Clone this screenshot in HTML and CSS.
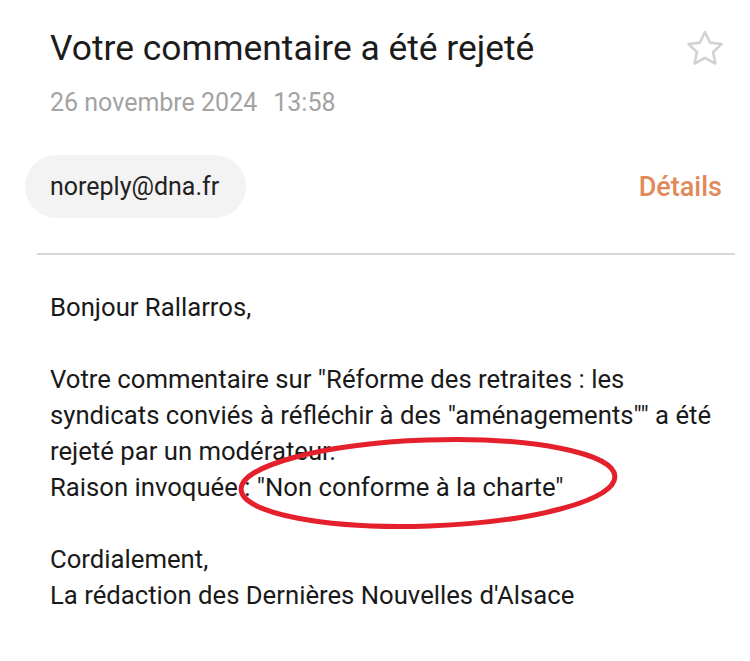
FILE: index.html
```
<!DOCTYPE html>
<html lang="fr">
<head>
    <meta charset="UTF-8">
    <meta name="viewport" content="width=device-width, initial-scale=1.0">
    <title>Votre commentaire a été rejeté</title>
    <link rel="stylesheet" href="styles.css">
</head>
<body>
    <div class="page">
        <div class="header">
            <h1>Votre commentaire a été rejeté</h1>
            <svg class="star" viewBox="0 0 40 40" width="44" height="44">
                <path d="M20 4.5 L24.6 14.2 L35 15.5 L27.4 22.7 L29.4 33.2 L20 28 L10.6 33.2 L12.6 22.7 L5 15.5 L15.4 14.2 Z"
                      fill="none" stroke="#d2d2d2" stroke-width="2.3" stroke-linejoin="round"/>
            </svg>
        </div>
        <div class="date"><span>26 novembre 2024</span><span class="time">13:58</span></div>

        <div class="sender">
            <span class="chip">noreply@dna.fr</span>
            <a class="details" href="#">Détails</a>
        </div>
        <hr class="divider">

        <div class="message">
            <p>Bonjour Rallarros,</p>
            <p>Votre commentaire sur "Réforme des retraites : les syndicats conviés à réfléchir à des "aménagements"" a été rejeté par un modérateur.<br>
            Raison invoquée : "Non conforme à la charte"</p>
            <p>Cordialement,<br>
            La rédaction des Dernières Nouvelles d'Alsace</p>
        </div>

        <svg class="circle" width="400" height="110" viewBox="0 0 400 110">
            <ellipse cx="198" cy="53" rx="187" ry="43" transform="rotate(-2 198 53)"
                     fill="none" stroke="#e3202b" stroke-width="5"/>
        </svg>
    </div>
</body>
</html>
```

FILE: styles.css
```
body {
    margin: 0;
    background-color: #fff;
    font-family: Roboto, "Liberation Sans", sans-serif;
    color: #1a1a1a;
}

.page {
    position: relative;
    width: 750px;
    height: 661px;
    overflow: hidden;
}

.header {
    display: flex;
    align-items: flex-start;
    justify-content: space-between;
    padding: 28px 23px 0 50px;
}

h1 {
    margin: 0;
    font-size: 35.4px;
    font-weight: 400;
    line-height: 40px;
    color: #1c1c1c;
}

.star {
    margin-top: -1px;
}

.date {
    margin: 17px 0 0 50px;
    font-size: 25px;
    line-height: 30px;
    color: #a3a3a3;
}

.date .time {
    margin-left: 16px;
}

.sender {
    display: flex;
    align-items: center;
    justify-content: space-between;
    margin-top: 37px;
    padding: 0 28px 0 25px;
}

.chip {
    display: inline-block;
    height: 63px;
    line-height: 63px;
    padding: 0 27px 0 25px;
    border-radius: 32px;
    background-color: #f3f3f3;
    font-size: 25px;
    color: #222;
}

.details {
    font-size: 27px;
    font-weight: 500;
    color: #e2895a;
    text-decoration: none;
}

.divider {
    margin: 35px 15px 0 37px;
    border: none;
    height: 2px;
    background-color: #d6d6d6;
}

.message {
    margin-top: 34px;
    padding: 0 25px 0 50px;
    font-size: 25.7px;
    line-height: 36px;
    color: #1a1a1a;
}

.message p {
    margin: 0 0 36px;
}

.circle {
    position: absolute;
    left: 230px;
    top: 430px;
}
```
